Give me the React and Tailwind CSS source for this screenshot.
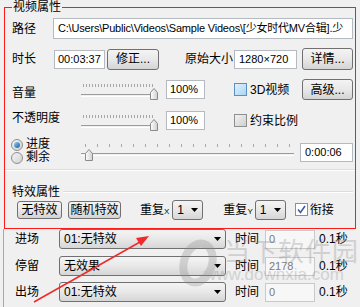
import React from 'react';

const btn =
  'flex items-center justify-center border border-[#707070] rounded-[3px] bg-linear-to-b from-[#f4f4f4] via-[#e8e8e8] to-[#d4d4d4] text-[12px] leading-none';
const box = 'flex items-center bg-white border border-[#b5b9c0] text-[11px] leading-none';

function Ticks({ n, className }) {
  return (
    <div className={`absolute flex justify-between ${className}`}>
      {Array.from({ length: n }).map((_, i) => (
        <span key={i} className="w-px h-[3px] bg-[#a8a8a8]" />
      ))}
    </div>
  );
}

function Thumb({ className }) {
  return (
    <svg className={`absolute ${className}`} width="8" height="12" viewBox="0 0 8 12">
      <defs>
        <linearGradient id="tg" x1="0" y1="0" x2="1" y2="0">
          <stop offset="0" stopColor="#ffffff" />
          <stop offset="1" stopColor="#cfcfcf" />
        </linearGradient>
      </defs>
      <path d="M0.5 4.5 L4 0.5 L7.5 4.5 V11.5 H0.5 Z" fill="url(#tg)" stroke="#8a8a8a" />
    </svg>
  );
}

function VolSlider() {
  return (
    <div className="relative w-[76px] h-[21px] shrink-0">
      <Ticks n={24} className="left-[3px] right-[3px] top-[5px]" />
      <div className="absolute left-[1px] right-[3px] top-[15px] h-[3px] border-t border-[#9c9c9c] border-b border-b-white" />
      <Thumb className="left-[70px] top-[9px]" />
    </div>
  );
}

function Check({ checked, tone }) {
  const bg =
    tone === 'blue'
      ? 'bg-linear-to-br from-[#dff1fc] to-[#a9d6f5] border-[#5b8fbf]'
      : 'bg-linear-to-br from-[#f2f2f2] to-[#cfcfcf] border-[#8e8f8f]';
  return (
    <span className={`w-[13px] h-[13px] border flex items-center justify-center shrink-0 ${checked ? 'bg-white border-[#8e8f8f]' : bg}`}>
      {checked && (
        <svg width="9" height="9" viewBox="0 0 9 9">
          <path d="M1 4.5 L3.5 7.5 L8 1" fill="none" stroke="#3b5ca8" strokeWidth="1.6" />
        </svg>
      )}
    </span>
  );
}

function Radio({ on }) {
  return (
    <span className="w-[12px] h-[12px] rounded-full border border-[#8e8f8f] bg-linear-to-br from-[#f4f4f4] to-[#d2d2d2] flex items-center justify-center shrink-0">
      {on && <span className="w-[6px] h-[6px] rounded-full bg-linear-to-br from-[#8fd0f7] to-[#1c5f9c]" />}
    </span>
  );
}

function Arrow() {
  return (
    <svg width="7" height="4" viewBox="0 0 7 4">
      <path d="M0 0 H7 L3.5 4 Z" fill="#000" />
    </svg>
  );
}

function Combo({ text, className }) {
  return (
    <div className={`flex items-center justify-between border border-[#707070] rounded-[3px] bg-linear-to-b from-[#f4f4f4] via-[#e8e8e8] to-[#d6d6d6] text-[12px] leading-none ${className}`}>
      <span className="pl-[4px]">{text}</span>
      <span className="pr-[4px] flex">
        <Arrow />
      </span>
    </div>
  );
}

function EffectRow({ label, combo, time, className }) {
  return (
    <div className={`flex items-center h-[20px] ${className}`}>
      <span className="w-[44px] text-[12px]">{label}</span>
      <Combo text={combo} className="w-[167px] h-full" />
      <span className="ml-[9px] w-[30px] text-[12px]">时间</span>
      <div className="w-[50px] h-[19px] flex items-center border border-[#c9c9c9] bg-[#f7f7f7] text-[11px] text-[#7a7a7a] pl-[3px]">{time}</div>
      <span className="ml-[4px] text-[12px]">0.1秒</span>
    </div>
  );
}

export default function App() {
  return (
    <div className="relative w-[360px] h-[307px] overflow-hidden bg-[#f0f0f0] text-black font-['Liberation_Sans','Noto_Sans_CJK_SC',sans-serif]">
      {/* red frame around the property groups */}
      <div className="relative ml-[4px] mt-[7px] w-[352px] h-[222px] border border-[#ff1a1a] flex flex-col pl-[7px] pr-[2px]">
        <span className="absolute left-[7px] -top-[9px] px-[1px] bg-[#f0f0f0] text-[12px] leading-[16px]">视频属性</span>

        <div className="flex items-center h-[21px] mt-[10px]">
          <span className="w-[41px] text-[12px]">路径</span>
          <div className={`${box} w-[300px] h-[21px] pl-[4px] whitespace-nowrap overflow-hidden tracking-[-0.2px]`}>
            C:\Users\Public\Videos\Sample Videos\[少女时代MV合辑].少
          </div>
        </div>

        <div className="flex items-center h-[22px] mt-[9px]">
          <span className="w-[42px] text-[12px]">时长</span>
          <div className={`${box} w-[51px] h-[19px] pl-[3px]`}>00:03:37</div>
          <div className={`${btn} ml-[2px] w-[52px] h-[21px]`}>修正...</div>
          <span className="ml-[26px] w-[49px] text-[12px]">原始大小</span>
          <div className={`${box} w-[63px] h-[19px] pl-[4px]`}>1280×720</div>
          <div className={`${btn} ml-auto w-[51px] h-[22px]`}>详情...</div>
        </div>

        <div className="flex items-center h-[21px] mt-[9px]">
          <span className="w-[68px] text-[12px] mt-[7px]">音量</span>
          <VolSlider />
          <div className={`${box} ml-[10px] w-[39px] h-[19px] pl-[3px]`}>100%</div>
          <span className="ml-[29px]">
            <Check tone="blue" />
          </span>
          <span className="ml-[3px] text-[12px]">3D视频</span>
          <div className={`${btn} ml-auto w-[51px] h-[21px]`}>高级...</div>
        </div>

        <div className="flex items-center h-[21px] mt-[10px]">
          <span className="w-[68px] text-[12px] mb-[6px]">不透明度</span>
          <VolSlider />
          <div className={`${box} ml-[10px] w-[39px] h-[19px] pl-[3px]`}>100%</div>
          <span className="ml-[29px]">
            <Check />
          </span>
          <span className="ml-[3px] text-[12px]">约束比例</span>
        </div>

        <div className="flex items-center h-[26px] mt-[7px]">
          <div className="w-[69px] flex flex-col text-[12px] leading-[13px]">
            <span className="flex items-center gap-[3px] -ml-[1px]">
              <Radio on />
              进度
            </span>
            <span className="flex items-center gap-[3px] -ml-[1px]">
              <Radio />
              剩余
            </span>
          </div>
          <div className="relative w-[213px] h-[26px] shrink-0">
            <Ticks n={18} className="left-[4px] right-[4px] top-[6px]" />
            <div className="absolute left-0 right-0 top-[15px] h-[3px] border-t border-[#9c9c9c] border-b border-b-white" />
            <Thumb className="left-[4px] top-[11px]" />
          </div>
          <div className={`${box} ml-auto w-[53px] h-[19px] pl-[4px] mt-[3px]`}>0:00:06</div>
        </div>

        <div className="-ml-[7px] -mr-[2px] mt-[5px] h-[2px] border-t border-[#d5dfe5] border-b border-b-white" />

        <div className="flex items-center h-[14px] mt-[14px]">
          <span className="text-[12px] leading-none">特效属性</span>
          <span className="flex-1 ml-[3px] h-[2px] border-t border-[#d5dfe5] border-b border-b-white" />
        </div>

        <div className="flex items-center h-[21px]">
          <div className={`${btn} ml-[5px] w-[45px] h-[18px] border-[#3c7fb1] from-[#eef6fb] via-[#e2eef7] to-[#c9dcea]`}>无特效</div>
          <div className={`${btn} ml-[6px] w-[53px] h-[18px]`}>随机特效</div>
          <span className="ml-[19px] text-[12px] flex items-baseline">
            重复<span className="text-[8px]">X</span>
          </span>
          <Combo text="1" className="ml-[3px] w-[31px] h-[20px]" />
          <span className="ml-[20px] text-[12px] flex items-baseline">
            重复<span className="text-[8px]">Y</span>
          </span>
          <Combo text="1" className="ml-[2px] w-[31px] h-[20px]" />
          <span className="ml-[9px]">
            <Check checked />
          </span>
          <span className="ml-[2px] text-[12px]">衔接</span>
        </div>
      </div>

      {/* effect timing rows */}
      <div className="ml-[3px] border-l border-[#a8a8a8] pl-[11px] flex flex-col h-[78px]">
        <EffectRow label="进场" combo="01:无特效" time="0" className="h-[19px]" />
        <EffectRow label="停留" combo="无效果" time="2178" className="mt-[7px]" />
        <EffectRow label="出场" combo="01:无特效" time="0" className="mt-[6px]" />
      </div>

      {/* watermark */}
      <div className="absolute left-[178px] top-[238px] flex items-start opacity-30 pointer-events-none">
        <svg width="44" height="50" viewBox="0 0 44 50">
          <ellipse cx="20" cy="25" rx="14" ry="20" transform="rotate(18 20 25)" fill="none" stroke="#8a8a8a" strokeWidth="8" />
        </svg>
        <div className="flex flex-col ml-[2px]">
          <span className="text-[26px] leading-[28px] text-[#8a8a8a] tracking-[1px]">当下软件园</span>
          <span className="text-[17px] leading-[18px] text-[#8a8a8a] -ml-[20px]">www.downxia.com</span>
        </div>
      </div>

      {/* red arrow */}
      <svg className="absolute left-0 top-0 pointer-events-none" width="360" height="307">
        <line x1="34" y1="302" x2="140" y2="242" stroke="#f02a2a" strokeWidth="1.5" />
        <path d="M149 236 L136 238 L141 246 Z" fill="#f02a2a" />
      </svg>
    </div>
  );
}
